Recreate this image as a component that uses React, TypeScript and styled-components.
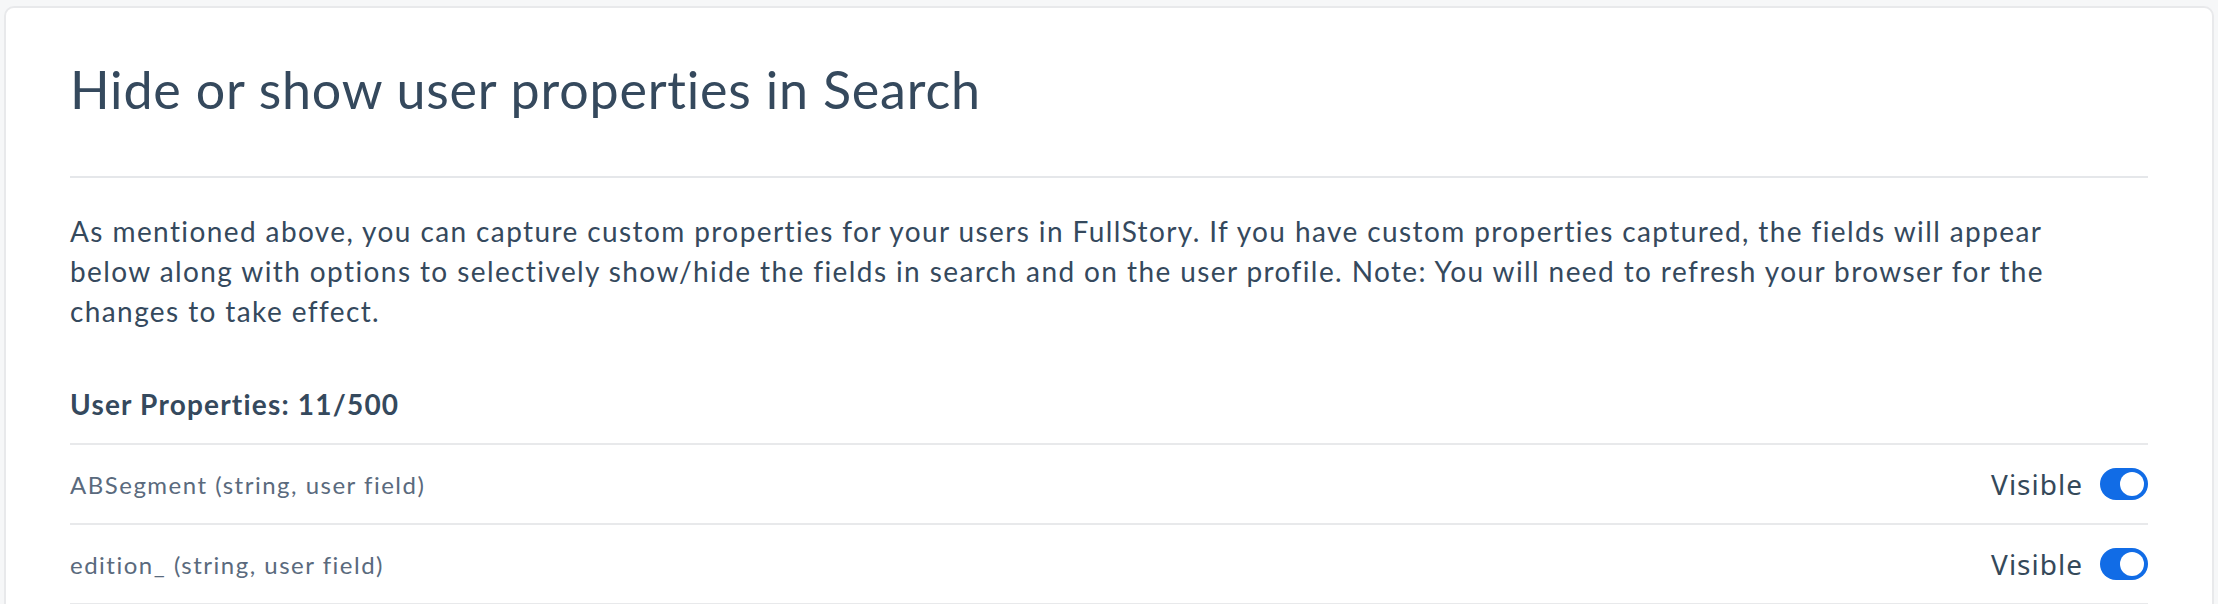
import React from "react";
import styled, { createGlobalStyle } from "styled-components";

const GlobalStyle = createGlobalStyle`
  html, body {
    margin: 0;
    padding: 0;
    background: #f6f7f8;
  }
  body {
    padding: 6px 4px 0;
    font-family: Lato, "Liberation Sans", sans-serif;
    font-variant-ligatures: none;
    -webkit-font-smoothing: antialiased;
  }
`;

const Card = styled.section`
  background: #ffffff;
  border: 2px solid #e8e9eb;
  border-radius: 10px;
  padding: 0 64px 40px;
`;

const Title = styled.h2`
  margin: 50px 0 0;
  font-family: Lato, sans-serif;
  font-weight: 400;
  font-size: 52px;
  line-height: 62px;
  letter-spacing: 0.8px;
  color: #35495d;
`;

const Divider = styled.hr`
  margin: 56px 0 0;
  border: 0;
  height: 2px;
  background: #e5e7ea;
`;

const Paragraph = styled.p`
  margin: 33px 0 0;
  font-family: Lato, sans-serif;
  font-size: 28px;
  line-height: 40px;
  letter-spacing: 1.4px;
  color: #35495d;
  white-space: nowrap;
`;

const SectionLabel = styled.h3`
  margin: 53px 0 19px;
  font-family: Lato, sans-serif;
  font-weight: 700;
  font-size: 28px;
  line-height: 40px;
  letter-spacing: 1.2px;
  color: #35495d;
`;

const List = styled.ul`
  list-style: none;
  margin: 0;
  padding: 0;
`;

const Row = styled.li`
  display: flex;
  align-items: center;
  justify-content: space-between;
  height: 78px;
  border-top: 2px solid #e8e9eb;
  &:last-child {
    border-bottom: 2px solid #e8e9eb;
  }
`;

const FieldName = styled.span`
  font-family: Lato, sans-serif;
  font-size: 24px;
  letter-spacing: 1.5px;
  color: #5a6a7d;
`;

const Control = styled.label`
  display: flex;
  align-items: center;
  gap: 17px;
  cursor: pointer;
`;

const ControlText = styled.span`
  font-family: "Noto Sans", sans-serif;
  font-size: 28px;
  letter-spacing: 1px;
  color: #34495a;
`;

const Switch = styled.span<{ $on: boolean }>`
  position: relative;
  display: inline-block;
  width: 48px;
  height: 32px;
  border-radius: 16px;
  background: ${(p) => (p.$on ? "#116ce6" : "#c7ced6")};
  &::after {
    content: "";
    position: absolute;
    top: 4px;
    left: ${(p) => (p.$on ? "20px" : "4px")};
    width: 24px;
    height: 24px;
    border-radius: 50%;
    background: #ffffff;
  }
`;

const properties = [
  { name: "ABSegment (string, user field)", visible: true },
  { name: "edition_ (string, user field)", visible: true },
];

export default function App() {
  return (
    <>
      <GlobalStyle />
      <Card>
        <Title>Hide or show user properties in Search</Title>
        <Divider />
        <Paragraph>
          As mentioned above, you can capture custom properties for your users in FullStory. If you have custom
          properties captured, the fields will appear
          <br />
          below along with options to selectively show/hide the fields in search and on the user profile. Note: You
          will need to refresh your browser for the
          <br />
          changes to take effect.
        </Paragraph>
        <SectionLabel>User Properties: 11/500</SectionLabel>
        <List>
          {properties.map((p) => (
            <Row key={p.name}>
              <FieldName>{p.name}</FieldName>
              <Control>
                <ControlText>Visible</ControlText>
                <Switch $on={p.visible} />
              </Control>
            </Row>
          ))}
        </List>
      </Card>
    </>
  );
}
